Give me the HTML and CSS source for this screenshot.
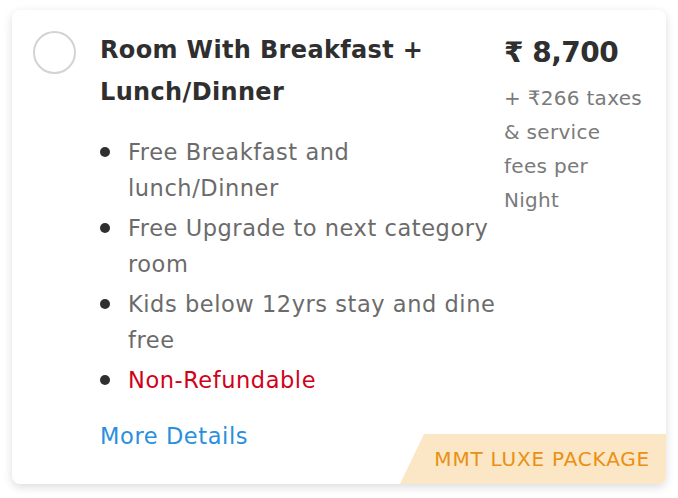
FILE: index.html
```html
<!DOCTYPE html>
<html>
<head>
<meta charset="utf-8">
<link rel="stylesheet" href="styles.css">
</head>
<body>
<div class="card">
  <div class="radio"></div>
  <div class="main">
    <h2 class="title">Room With Breakfast + Lunch/Dinner</h2>
    <ul class="perks">
      <li>Free Breakfast and lunch/Dinner</li>
      <li>Free Upgrade to next category room</li>
      <li>Kids below 12yrs stay and dine free</li>
      <li class="red">Non-Refundable</li>
    </ul>
    <a class="more">More Details</a>
  </div>
  <div class="price">
    <div class="amount">₹ 8,700</div>
    <div class="taxes">+ ₹266 taxes &amp; service fees per Night</div>
  </div>
  <div class="badge">MMT LUXE PACKAGE</div>
</div>
</body>
</html>
```
FILE: styles.css
```css
* { box-sizing: border-box; }
body {
  margin: 0;
  background: #fff;
  font-family: "DejaVu Sans", sans-serif;
  padding: 10px 12px 14px 12px;
}
.card {
  position: relative;
  width: 654px;
  height: 474px;
  background: #fff;
  border-radius: 8px;
  box-shadow: 0 3px 10px rgba(0,0,0,0.14);
  overflow: hidden;
  display: flex;
  padding: 21px 16px 0 21px;
}
.radio {
  flex: none;
  width: 43px;
  height: 43px;
  border: 2px solid #d3d3d3;
  border-radius: 50%;
  margin-right: 24px;
}
.main {
  flex: none;
  width: 400px;
}
.title {
  margin: -2px 0 0 0;
  font-size: 24px;
  line-height: 42px;
  font-weight: 700;
  color: #2f2f2f;
  width: 340px;
  letter-spacing: 0.35px;
}
.perks {
  list-style: none;
  margin: 21px 0 0 0;
  padding: 0;
  width: 400px;
}
.perks li {
  position: relative;
  padding-left: 28px;
  font-size: 22.5px;
  line-height: 36px;
  letter-spacing: 0.55px;
  color: #6b6b6b;
  margin-bottom: 4px;
}
.perks li::before {
  content: "";
  position: absolute;
  left: 0;
  top: 13px;
  width: 10px;
  height: 10px;
  border-radius: 50%;
  background: #2f2f2f;
}
.perks li.red { color: #d0021b; }
.more {
  display: block;
  margin-top: 20px;
  font-size: 22.5px;
  line-height: 36px;
  letter-spacing: 0.6px;
  color: #2a8fdc;
}
.price {
  flex: 1;
  padding-left: 4px;
}
.amount {
  margin-top: 2px;
  font-size: 28px;
  line-height: 40px;
  font-weight: 700;
  letter-spacing: -0.5px;
  color: #2f2f2f;
}
.taxes {
  margin-top: 8px;
  font-size: 20px;
  line-height: 34px;
  letter-spacing: 0.3px;
  color: #7a7a7a;
  width: 140px;
}
.badge {
  position: absolute;
  right: 0;
  bottom: 0;
  width: 266px;
  height: 50px;
  background: #fbe6c6;
  clip-path: polygon(24px 0, 100% 0, 100% 100%, 0 100%);
  color: #ea9012;
  font-size: 20px;
  line-height: 50px;
  text-align: right;
  padding-right: 16px;
  letter-spacing: 0.8px;
}
```
